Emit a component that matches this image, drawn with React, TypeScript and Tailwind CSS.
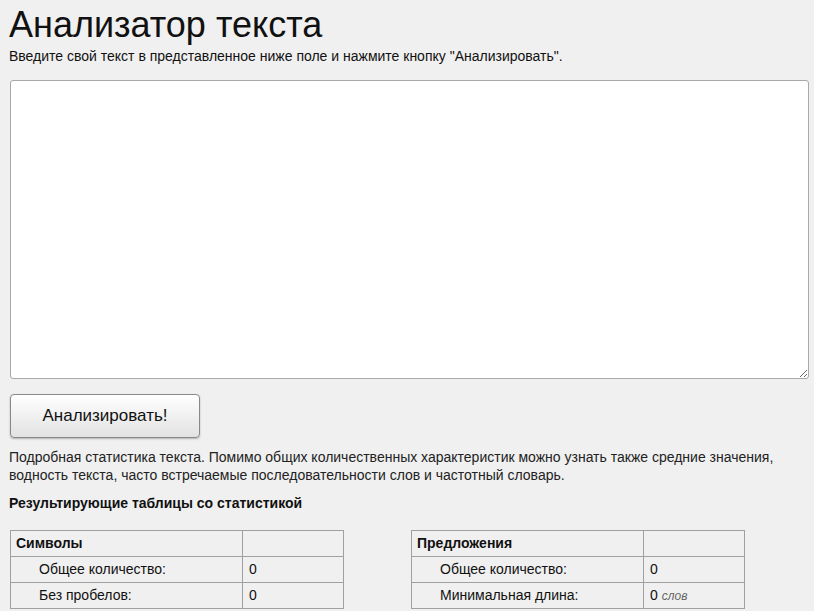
export default function App() {
  const f = { fontFamily: '"Liberation Sans", Arial, sans-serif' };
  const Table = ({ title, rows }: { title: string; rows: [string, string, string?][] }) => (
    <table className="border-collapse text-[14px] text-[#111]" style={f}>
      <tbody>
        <tr className="h-[26px]">
          <td className="border border-[#a0a0a0] w-[232px] pl-[5px] font-bold">{title}</td>
          <td className="border border-[#a0a0a0] w-[101px] pl-[6px]"></td>
        </tr>
        {rows.map(([a, b, c], i) => (
          <tr key={i} className="h-[26px]">
            <td className="border border-[#a0a0a0] pl-[28px]">{a}</td>
            <td className="border border-[#a0a0a0] pl-[6px]">
              {b}
              {c && <i className="text-[12px] text-[#666] ml-1">{c}</i>}
            </td>
          </tr>
        ))}
      </tbody>
    </table>
  );
  return (
    <div className="h-[611px] overflow-hidden bg-[#f0f0f0] px-[9px] text-[#111]" style={f}>
      <h1 className="text-[36px] leading-[42px] pt-[4px] font-normal">Анализатор текста</h1>
      <p className="text-[14px] leading-[18px] mt-[1px]">
        Введите свой текст в представленное ниже поле и нажмите кнопку "Анализировать".
      </p>
      <textarea className="block mt-[15px] ml-[1px] w-[799px] h-[299px] bg-white border border-[#a9a9a9] rounded-[3px] resize-y" />
      <button
        className="block mt-[15px] ml-[1px] w-[190px] h-[44px] rounded-[4px] border border-[#888] text-[17px] bg-gradient-to-b from-white to-[#e2e2e2] shadow-[0_1px_2px_rgba(0,0,0,0.25)]"
        style={f}
      >
        Анализировать!
      </button>
      <p className="text-[14px] leading-[18px] mt-[10px] text-[#222]">
        Подробная статистика текста. Помимо общих количественных характеристик можно узнать также средние значения,
        водность текста, часто встречаемые последовательности слов и частотный словарь.
      </p>
      <p className="text-[14px] font-bold mt-[9px]">Результирующие таблицы со статистикой</p>
      <div className="flex gap-[67px] mt-[16px] ml-[1px]">
        <Table title="Символы" rows={[["Общее количество:", "0"], ["Без пробелов:", "0"]]} />
        <Table title="Предложения" rows={[["Общее количество:", "0"], ["Минимальная длина:", "0", "слов"]]} />
      </div>
    </div>
  );
}
